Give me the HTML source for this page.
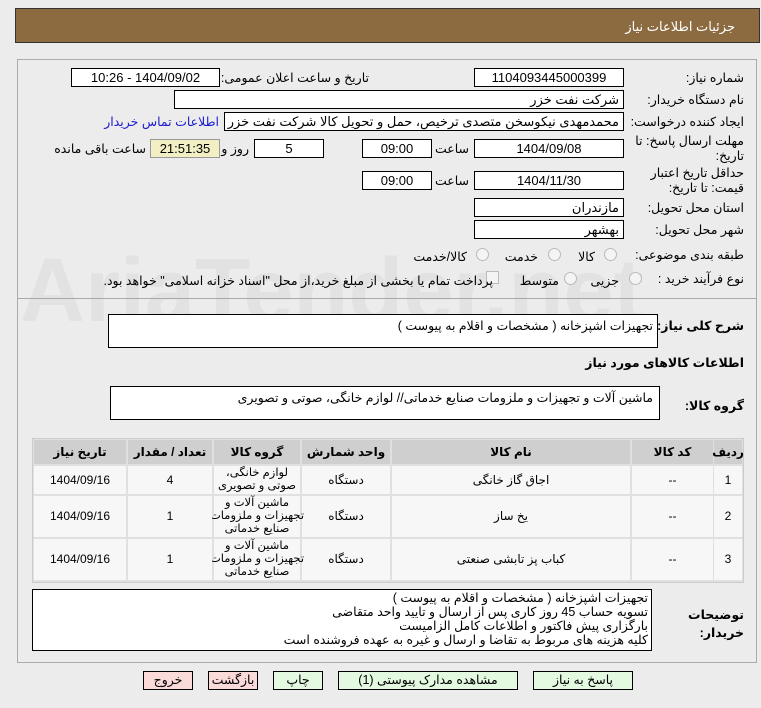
<!DOCTYPE html>
<html><head><meta charset="utf-8"><style>
*{box-sizing:border-box;margin:0;padding:0}
body{width:761px;height:708px;background:#ececec;font-family:"Liberation Sans","DejaVu Sans",sans-serif;font-size:12px;color:#000;position:relative;overflow:hidden;direction:rtl}
.a{position:absolute;white-space:nowrap}
.box{position:absolute;background:#fff;border:1px solid #000;height:19px;line-height:17px;text-align:center;font-size:13px}
.lbl{position:absolute;white-space:nowrap;text-align:right;font-size:12.5px}
.rad{position:absolute;width:13px;height:13px;border-radius:50%;border:1px solid #bbb;background:#f4f4f4}
.c{position:absolute;display:flex;align-items:center;justify-content:center;text-align:center;background:#f7f7f7;font-size:12px;line-height:13px;white-space:nowrap}
.h{background:#cfcfcf;font-weight:bold}
.g{font-size:11.5px}
.btn{position:absolute;top:671px;height:19px;border:1px solid #000;text-align:center;line-height:17px;font-size:12.5px}
</style></head><body>
<div class="a" style="left:15px;top:8px;width:745px;height:35px;background:#8c6b40;border:1px solid #333"></div>
<div class="a" style="right:26px;top:19px;color:#fff;font-size:13px">جزئیات اطلاعات نیاز</div>
<div class="a" style="left:17px;top:59px;width:740px;height:240px;border:1px solid #aaa"></div>
<div class="a" style="left:17px;top:299px;width:740px;height:364px;border:1px solid #aaa;border-top:none"></div>
<div class="a" style="left:20px;top:240px;font-size:90px;font-weight:bold;color:rgba(160,160,160,.12);direction:ltr">AriaTender.net</div>

<div class="lbl" style="right:17px;top:70px">شماره نیاز:</div>
<div class="box" style="left:474px;top:68px;width:150px">1104093445000399</div>
<div class="lbl" style="right:392px;top:70px">تاریخ و ساعت اعلان عمومی:</div>
<div class="box" style="left:71px;top:68px;width:149px">1404/09/02 - 10:26</div>

<div class="lbl" style="right:17px;top:92px">نام دستگاه خریدار:</div>
<div class="box" style="left:174px;top:90px;width:450px;text-align:right;padding-right:4px">شرکت نفت خزر</div>

<div class="lbl" style="right:17px;top:114px">ایجاد کننده درخواست:</div>
<div class="box" style="left:224px;top:112px;width:400px;text-align:right;padding-right:4px">محمدمهدی نیکوسخن متصدی ترخیص، حمل و تحویل کالا شرکت نفت خزر</div>
<div class="lbl" style="right:542px;top:114px;color:#1a1ad0">اطلاعات تماس خریدار</div>

<div class="lbl" style="right:17px;top:134px;line-height:15px;text-align:right">مهلت ارسال پاسخ: تا<br>تاریخ:</div>
<div class="box" style="left:474px;top:139px;width:150px">1404/09/08</div>
<div class="lbl" style="right:292px;top:141px">ساعت</div>
<div class="box" style="left:362px;top:139px;width:70px">09:00</div>
<div class="box" style="left:254px;top:139px;width:70px">5</div>
<div class="lbl" style="right:512px;top:141px">روز و</div>
<div class="box" style="left:150px;top:139px;width:70px;background:#f3efc4;border-color:#999">21:51:35</div>
<div class="lbl" style="right:615px;top:141px">ساعت باقی مانده</div>

<div class="lbl" style="right:17px;top:166px;line-height:15px">حداقل تاریخ اعتبار<br>قیمت: تا تاریخ:</div>
<div class="box" style="left:474px;top:171px;width:150px">1404/11/30</div>
<div class="lbl" style="right:292px;top:173px">ساعت</div>
<div class="box" style="left:362px;top:171px;width:70px">09:00</div>

<div class="lbl" style="right:17px;top:200px">استان محل تحویل:</div>
<div class="box" style="left:474px;top:198px;width:150px;text-align:right;padding-right:4px">مازندران</div>
<div class="lbl" style="right:17px;top:222px">شهر محل تحویل:</div>
<div class="box" style="left:474px;top:220px;width:150px;text-align:right;padding-right:4px">بهشهر</div>

<div class="lbl" style="right:17px;top:247px">طبقه بندی موضوعی:</div>
<div class="rad" style="left:604px;top:248px"></div><div class="lbl" style="right:166px;top:249px">کالا</div>
<div class="rad" style="left:548px;top:248px"></div><div class="lbl" style="right:223px;top:249px">خدمت</div>
<div class="rad" style="left:476px;top:248px"></div><div class="lbl" style="right:294px;top:249px">کالا/خدمت</div>

<div class="lbl" style="right:17px;top:271px">نوع فرآیند خرید :</div>
<div class="rad" style="left:629px;top:272px"></div><div class="lbl" style="right:142px;top:273px">جزیی</div>
<div class="rad" style="left:564px;top:272px"></div><div class="lbl" style="right:202px;top:273px">متوسط</div>
<div class="a" style="left:486px;top:271px;width:13px;height:13px;border:1px solid #bbb;background:#f4f4f4"></div>
<div class="lbl" style="right:268px;top:273px">پرداخت تمام یا بخشی از مبلغ خرید،از محل "اسناد خزانه اسلامی" خواهد بود.</div>

<div class="lbl" style="right:17px;top:318px;font-weight:bold">شرح کلی نیاز:</div>
<div class="a" style="left:108px;top:314px;width:550px;height:34px;background:#fff;border:1px solid #000;text-align:right;padding:3px 4px;font-size:12.5px">تجهیزات اشپزخانه ( مشخصات و اقلام به پیوست )</div>
<div class="lbl" style="right:17px;top:355px;font-weight:bold">اطلاعات کالاهای مورد نیاز</div>
<div class="lbl" style="right:17px;top:398px;font-weight:bold">گروه کالا:</div>
<div class="a" style="left:110px;top:386px;width:550px;height:34px;background:#fff;border:1px solid #000;text-align:right;padding:3px 6px;font-size:12.5px">ماشین آلات و تجهیزات و ملزومات صنایع خدماتی// لوازم خانگی، صوتی و تصویری</div>

<div class="a" style="left:32px;top:438px;width:712px;height:145px;background:#e0e0e0;border:1px solid #ccc"></div>
<div class="c h" style="left:714px;top:440px;width:28px;height:24px">ردیف</div>
<div class="c h" style="left:632px;top:440px;width:81px;height:24px">کد کالا</div>
<div class="c h" style="left:392px;top:440px;width:238px;height:24px">نام کالا</div>
<div class="c h" style="left:302px;top:440px;width:88px;height:24px">واحد شمارش</div>
<div class="c h" style="left:214px;top:440px;width:86px;height:24px">گروه کالا</div>
<div class="c h" style="left:128px;top:440px;width:84px;height:24px">تعداد / مقدار</div>
<div class="c h" style="left:34px;top:440px;width:92px;height:24px">تاریخ نیاز</div>

<div class="c" style="left:714px;top:466px;width:28px;height:28px">1</div>
<div class="c" style="left:632px;top:466px;width:81px;height:28px">--</div>
<div class="c" style="left:392px;top:466px;width:238px;height:28px">اجاق گاز خانگی</div>
<div class="c" style="left:302px;top:466px;width:88px;height:28px">دستگاه</div>
<div class="c g" style="left:214px;top:466px;width:86px;height:28px">لوازم خانگی،<br>صوتی و تصویری</div>
<div class="c" style="left:128px;top:466px;width:84px;height:28px">4</div>
<div class="c" style="left:34px;top:466px;width:92px;height:28px">1404/09/16</div>

<div class="c" style="left:714px;top:496px;width:28px;height:41px">2</div>
<div class="c" style="left:632px;top:496px;width:81px;height:41px">--</div>
<div class="c" style="left:392px;top:496px;width:238px;height:41px">یخ ساز</div>
<div class="c" style="left:302px;top:496px;width:88px;height:41px">دستگاه</div>
<div class="c g" style="left:214px;top:496px;width:86px;height:41px">ماشین آلات و<br>تجهیزات و ملزومات<br>صنایع خدماتی</div>
<div class="c" style="left:128px;top:496px;width:84px;height:41px">1</div>
<div class="c" style="left:34px;top:496px;width:92px;height:41px">1404/09/16</div>

<div class="c" style="left:714px;top:539px;width:28px;height:41px">3</div>
<div class="c" style="left:632px;top:539px;width:81px;height:41px">--</div>
<div class="c" style="left:392px;top:539px;width:238px;height:41px">کباب پز تابشی صنعتی</div>
<div class="c" style="left:302px;top:539px;width:88px;height:41px">دستگاه</div>
<div class="c g" style="left:214px;top:539px;width:86px;height:41px">ماشین آلات و<br>تجهیزات و ملزومات<br>صنایع خدماتی</div>
<div class="c" style="left:128px;top:539px;width:84px;height:41px">1</div>
<div class="c" style="left:34px;top:539px;width:92px;height:41px">1404/09/16</div>

<div class="lbl" style="right:17px;top:606px;font-weight:bold;line-height:18px">توضیحات<br>خریدار:</div>
<div class="a" style="left:32px;top:589px;width:620px;height:62px;background:#fff;border:1px solid #000;text-align:right;padding:1px 3px;font-size:12.5px;line-height:14px">تجهیزات اشپزخانه ( مشخصات و اقلام به پیوست )<br>تسویه حساب 45 روز کاری پس از ارسال و تایید واحد متقاضی<br>بارگزاری پیش فاکتور و اطلاعات کامل الزامیست<br>کلیه هزینه های مربوط به تقاضا و ارسال و غیره به عهده فروشنده است</div>

<div class="btn" style="left:533px;width:100px;background:#e3f9e0">پاسخ به نیاز</div>
<div class="btn" style="left:338px;width:180px;background:#e3f9e0">مشاهده مدارک پیوستی (1)</div>
<div class="btn" style="left:273px;width:50px;background:#e3f9e0">چاپ</div>
<div class="btn" style="left:208px;width:50px;background:#fbdada">بازگشت</div>
<div class="btn" style="left:143px;width:50px;background:#fbdada">خروج</div>
</body></html>
